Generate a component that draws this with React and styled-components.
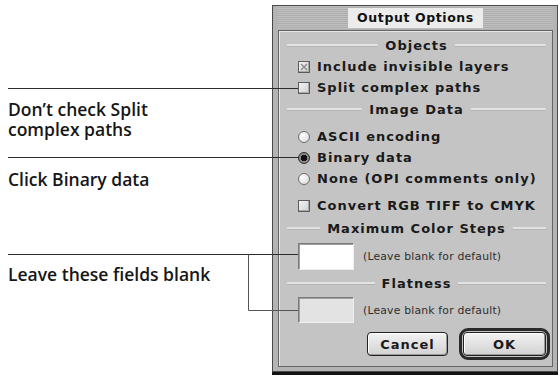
import React from "react";
import styled, { createGlobalStyle } from "styled-components";

const GlobalStyle = createGlobalStyle`
  html, body { margin: 0; padding: 0; background: #ffffff; }
  #root { width: 560px; height: 380px; }
`;

const Page = styled.div`
  position: relative;
  display: flex;
  width: 560px;
  height: 380px;
  overflow: hidden;
  background: #fff;
`;

const Notes = styled.div`
  width: 272px;
  box-sizing: border-box;
  padding: 99px 0 0 8px;
  display: flex;
  flex-direction: column;
`;

const Note = styled.div`
  margin-top: ${(p) => p.$mt || 0}px;
  font-family: "Open Sans", Lato, sans-serif;
  font-weight: 600;
  font-size: 17.5px;
  line-height: 20px;
  color: #161616;
  white-space: nowrap;
`;

const NoteLine = styled.div`
  height: 20px;
`;

const DialogArea = styled.div`
  padding-top: 5px;
`;

const Window = styled.div`
  width: 286px;
  height: 367px;
  box-sizing: border-box;
  border: 1px solid #4a4a4a;
  background: #b4b4b4;
  box-shadow: 0 3px 0 #141414;
  padding: 0 4px 4px 5px;
  display: flex;
  flex-direction: column;
  font-family: "DejaVu Sans", Verdana, sans-serif;
  font-weight: bold;
  color: #1a1a1a;
`;

const TitleBar = styled.div`
  height: 24px;
  flex: none;
  display: flex;
  align-items: center;
  justify-content: center;
  background: repeating-linear-gradient(
    to bottom,
    #c0c0c0 0px,
    #c0c0c0 1px,
    #adadad 1px,
    #adadad 2px
  );
`;

const Title = styled.div`
  background: #ececec;
  padding: 0 9px;
  height: 20px;
  line-height: 20px;
  font-size: 12.5px;
  letter-spacing: 0.6px;
  color: #111;
`;

const Panel = styled.div`
  flex: 1;
  border: 1px solid #666;
  box-shadow: inset 1px 1px 0 #e6e6e6;
  background: #c4c4c4;
  padding: 4px 2px 0 8px;
  display: flex;
  flex-direction: column;
`;

const Heading = styled.div`
  height: 21px;
  margin-top: ${(p) => p.$mt || 0}px;
  margin-right: 4px;
  display: flex;
  align-items: center;
  gap: 7px;
  font-size: 13px;
  letter-spacing: 1px;
  &::before,
  &::after {
    content: "";
    flex: 1;
    height: 2px;
    background: #e2e2e2;
    border-bottom: 1px solid #b4b4b4;
  }
`;

const Row = styled.div`
  height: 21px;
  margin-top: ${(p) => p.$mt || 0}px;
  padding-left: 11px;
  display: flex;
  align-items: center;
  gap: 7px;
  font-size: 13px;
  letter-spacing: 1px;
  white-space: nowrap;
`;

const Box = styled.span`
  width: 12px;
  height: 12px;
  flex: none;
  box-sizing: border-box;
  border: 1px solid #5c5c5c;
  background: linear-gradient(135deg, #f4f4f4, #cfcfcf);
  box-shadow: inset -1px -1px 0 #a8a8a8;
  display: flex;
  align-items: center;
  justify-content: center;
`;

const Radio = styled.span`
  width: 12px;
  height: 12px;
  flex: none;
  box-sizing: border-box;
  border-radius: 50%;
  border: 1px solid ${(p) => (p.$on ? "#2a2a2a" : "#6e6e6e")};
  background: ${(p) =>
    p.$on
      ? "radial-gradient(circle at 50% 50%, #111 0 3px, #8a8a8a 3.5px)"
      : "radial-gradient(circle at 35% 35%, #ffffff, #d6d6d6)"};
`;

const FieldRow = styled.div`
  height: ${(p) => p.$h}px;
  margin-top: ${(p) => p.$mt || 0}px;
  padding-left: 11px;
  display: flex;
  align-items: stretch;
  gap: 9px;
`;

const Field = styled.div`
  width: 56px;
  box-sizing: border-box;
  border: 1px solid;
  border-color: #7a7a7a #efefef #efefef #7a7a7a;
  box-shadow: inset 1px 1px 0 #a0a0a0;
  background: ${(p) => (p.$dim ? "#e3e3e3" : "#ffffff")};
`;

const Hint = styled.span`
  align-self: center;
  font-family: "DejaVu Sans", Verdana, sans-serif;
  font-weight: normal;
  font-size: 10.8px;
  letter-spacing: 0.2px;
  color: #2e2e2e;
`;

const Buttons = styled.div`
  margin-top: 5px;
  display: flex;
  justify-content: flex-end;
  align-items: center;
  gap: 11px;
`;

const Button = styled.div`
  width: ${(p) => p.$w}px;
  height: 24px;
  box-sizing: border-box;
  border: 1px solid #222;
  border-radius: 4px;
  background: linear-gradient(#f2f2f2, #d2d2d2);
  box-shadow: inset -1px -1px 0 #9a9a9a, inset 1px 1px 0 #ffffff;
  display: flex;
  align-items: center;
  justify-content: center;
  font-size: 13px;
  letter-spacing: 1px;
`;

const DefaultRing = styled.div`
  border: 3px solid #2a2a2a;
  border-radius: 9px;
  padding: 1px;
  background: #c4c4c4;
`;

const Leaders = styled.svg`
  position: absolute;
  top: 0;
  left: 0;
  pointer-events: none;
`;

const Check = () => (
  <svg width="8" height="8" viewBox="0 0 8 8">
    <path d="M1 1 L7 7 M7 1 L1 7" stroke="#8a8a8a" strokeWidth="1.4" />
  </svg>
);

export default function App() {
  return (
    <>
      <GlobalStyle />
      <Page>
        <Notes>
          <Note>
            <NoteLine>Don’t check Split</NoteLine>
            <NoteLine>complex paths</NoteLine>
          </Note>
          <Note $mt={30}>Click Binary data</Note>
          <Note $mt={75}>Leave these fields blank</Note>
        </Notes>
        <DialogArea>
          <Window>
            <TitleBar>
              <Title>Output Options</Title>
            </TitleBar>
            <Panel>
              <Heading>Objects</Heading>
              <Row>
                <Box>
                  <Check />
                </Box>
                Include invisible layers
              </Row>
              <Row>
                <Box />
                Split complex paths
              </Row>
              <Heading $mt={1}>Image Data</Heading>
              <Row $mt={6}>
                <Radio />
                ASCII encoding
              </Row>
              <Row>
                <Radio $on />
                Binary data
              </Row>
              <Row>
                <Radio />
                None (OPI comments only)
              </Row>
              <Row $mt={6}>
                <Box />
                Convert RGB TIFF to CMYK
              </Row>
              <Heading $mt={2}>Maximum Color Steps</Heading>
              <FieldRow $h={27} $mt={4}>
                <Field />
                <Hint>(Leave blank for default)</Hint>
              </FieldRow>
              <Heading $mt={3}>Flatness</Heading>
              <FieldRow $h={26} $mt={3}>
                <Field $dim />
                <Hint>(Leave blank for default)</Hint>
              </FieldRow>
              <Buttons>
                <Button $w={81}>Cancel</Button>
                <DefaultRing>
                  <Button $w={83}>OK</Button>
                </DefaultRing>
              </Buttons>
            </Panel>
          </Window>
        </DialogArea>
        <Leaders width="560" height="380" viewBox="0 0 560 380">
          <g stroke="#2c2c2c" strokeWidth="1" fill="none">
            <line x1="8" y1="88.5" x2="298" y2="88.5" />
            <line x1="8" y1="157.5" x2="299" y2="157.5" />
            <line x1="8" y1="254.5" x2="298" y2="254.5" />
            <polyline points="248.5,254.5 248.5,310.5 298,310.5" stroke="#555" />
          </g>
        </Leaders>
      </Page>
    </>
  );
}
